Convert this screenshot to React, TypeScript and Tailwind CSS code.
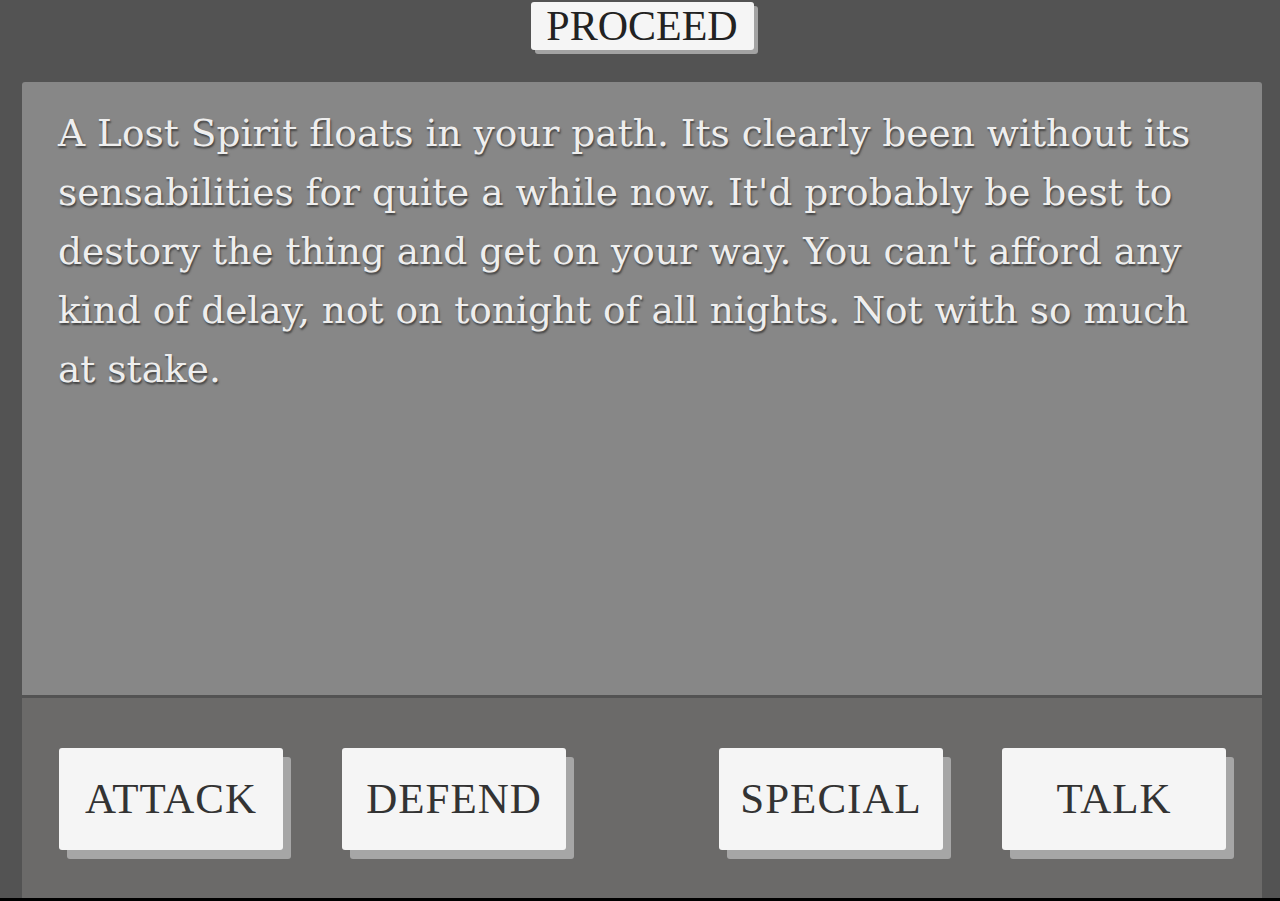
import React from "react";

const lines = [
  "A Lost Spirit floats in your path. Its clearly been without its",
  "sensabilities for quite a while now. It'd probably be best to",
  "destory the thing and get on your way. You can't afford any",
  "kind of delay, not on tonight of all nights. Not with so much",
  "at stake.",
];

function ActionButton({ label }: { label: string }) {
  return (
    <button className="w-[224px] h-[102px] rounded-[3px] bg-[#f5f5f5] text-[#333] text-[43px] tracking-[1px] shadow-[8px_9px_0_0_#a6a6a6] font-['Liberation_Serif',serif]">
      {label}
    </button>
  );
}

export default function App() {
  return (
    <div className="w-[1280px] h-[901px] bg-[#535353] flex flex-col overflow-hidden">
      <div className="h-[82px] flex justify-center pt-[2px] pl-[4px]">
        <button className="w-[223px] h-[48px] rounded-[3px] bg-[#f5f5f5] text-[#222] text-[42px] leading-none shadow-[4px_4px_0_0_#a3a3a3] font-['Liberation_Serif',serif]">
          PROCEED
        </button>
      </div>
      <div className="ml-[22px] mr-[18px] h-[613px] bg-[#878787] rounded-t-[3px] pl-[36px] pt-[22px]">
        <p className="text-[#eeeeee] text-[37.5px] leading-[59px] [text-shadow:1px_2px_2px_#404040] font-['DejaVu_Serif',serif]">
          {lines.map((l) => (
            <span key={l} className="block whitespace-nowrap">
              {l}
            </span>
          ))}
        </p>
      </div>
      <div className="ml-[22px] mr-[18px] mt-[3px] h-[200px] bg-[#6b6a69] flex items-start pt-[50px]">
        <div className="flex gap-[59px] pl-[37px]">
          <ActionButton label="ATTACK" />
          <ActionButton label="DEFEND" />
        </div>
        <div className="flex gap-[59px] pl-[153px]">
          <ActionButton label="SPECIAL" />
          <ActionButton label="TALK" />
        </div>
      </div>
      <div className="flex-1 bg-black" />
    </div>
  );
}
